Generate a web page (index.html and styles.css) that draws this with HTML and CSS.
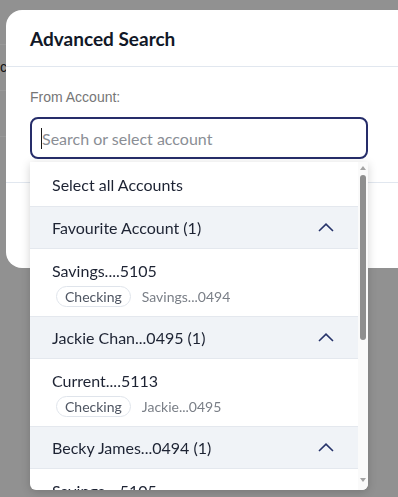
FILE: index.html
```html
<!DOCTYPE html>
<html lang="en">
<head>
    <meta charset="UTF-8">
    <meta name="viewport" content="width=device-width, initial-scale=1.0">
    <title>Advanced Search</title>
    <link rel="stylesheet" href="styles.css">
</head>
<body>
    <!-- page behind the dialog -->
    <div class="page">
        <div class="page-head"></div>
        <div class="page-row">contact</div>
        <div class="page-row"></div>
    </div>
    <div class="overlay"></div>

    <div class="modal">
        <div class="modal-header">
            <h2>Advanced Search</h2>
        </div>
        <div class="modal-body">
            <label class="field-label" for="account">From Account:</label>
            <div class="select">
                <input class="select-input" id="account" type="text" placeholder="Search or select account" autofocus>
                <span class="caret"></span>
                <div class="dropdown">
                    <div class="dropdown-list">
                        <div class="option-all">Select all Accounts</div>

                        <div class="group-head">
                            <span>Favourite Account (1)</span>
                            <svg class="chevron" width="16" height="9" viewBox="0 0 16 9"><path d="M1 8 L8 1.2 L15 8" fill="none" stroke="#26336a" stroke-width="1.6"/></svg>
                        </div>
                        <div class="account">
                            <div class="account-name">Savings....5105</div>
                            <div class="account-meta"><span class="chip">Checking</span><span class="owner">Savings...0494</span></div>
                        </div>

                        <div class="group-head">
                            <span>Jackie Chan...0495 (1)</span>
                            <svg class="chevron" width="16" height="9" viewBox="0 0 16 9"><path d="M1 8 L8 1.2 L15 8" fill="none" stroke="#26336a" stroke-width="1.6"/></svg>
                        </div>
                        <div class="account">
                            <div class="account-name">Current....5113</div>
                            <div class="account-meta"><span class="chip">Checking</span><span class="owner">Jackie...0495</span></div>
                        </div>

                        <div class="group-head">
                            <span>Becky James...0494 (1)</span>
                            <svg class="chevron" width="16" height="9" viewBox="0 0 16 9"><path d="M1 8 L8 1.2 L15 8" fill="none" stroke="#26336a" stroke-width="1.6"/></svg>
                        </div>
                        <div class="account">
                            <div class="account-name">Savings....5105</div>
                            <div class="account-meta"><span class="chip">Checking</span><span class="owner">Becky...0494</span></div>
                        </div>
                    </div>
                    <div class="scrollbar">
                        <span class="arrow-up"></span>
                        <span class="thumb"></span>
                        <span class="arrow-down"></span>
                    </div>
                </div>
            </div>
        </div>
        <div class="modal-footer"></div>
    </div>
</body>
</html>
```

FILE: styles.css
```css
body {
    margin: 0;
    width: 398px;
    height: 497px;
    overflow: hidden;
    font-family: Lato, "Liberation Sans", sans-serif;
    background-color: #f2f2f2;
}
.page-head {
    height: 44px;
    border-bottom: 1px solid #ffffff;
}
.page-row {
    height: 45px;
    border-bottom: 1px solid #ffffff;
    font: 14px/45px "Liberation Sans", Arial, sans-serif;
    color: #222;
}
.overlay {
    position: fixed;
    inset: 0;
    background: rgba(0, 0, 0, 0.4);
}
.modal {
    position: absolute;
    left: 6px;
    top: 10px;
    width: 440px;
    height: 258px;
    background: #fff;
    border-radius: 16px;
    display: flex;
    flex-direction: column;
}
.modal-header {
    height: 57px;
    box-sizing: border-box;
    padding: 0 24px;
    display: flex;
    align-items: center;
    border-bottom: 1px solid #e1e7ef;
}
.modal-header h2 {
    margin: 0;
    font-size: 19px;
    font-weight: 700;
    color: #111827;
}
.modal-body {
    height: 116px;
    box-sizing: border-box;
    padding: 22px 24px 0;
    border-bottom: 1px solid #e1e7ef;
}
.field-label {
    display: block;
    margin-bottom: 11px;
    font: 14px/17px "Liberation Sans", Arial, sans-serif;
    color: #767676;
}
.select {
    position: relative;
    width: 338px;
}
.select-input {
    display: block;
    width: 100%;
    height: 42px;
    box-sizing: border-box;
    padding: 0 10px;
    border: 2px solid #262d6a;
    border-radius: 8px;
    outline: none;
    font-family: Lato, sans-serif;
    font-size: 16px;
    color: #1d2333;
    caret-color: transparent;
}
.select-input::placeholder {
    color: #8a8e95;
}
.caret {
    position: absolute;
    left: 11px;
    top: 11px;
    width: 1px;
    height: 21px;
    background: #1a1a1a;
}
.dropdown {
    position: absolute;
    top: 45px;
    left: 0;
    right: 0;
    height: 328px;
    display: flex;
    background: #fff;
    border-radius: 0 0 6px 6px;
    box-shadow: 0 2px 10px rgba(0, 0, 0, 0.18);
    overflow: hidden;
}
.dropdown-list {
    flex: 1;
    overflow: hidden;
    font-size: 16px;
    color: #1d2333;
}
.option-all {
    height: 44px;
    padding-left: 22px;
    display: flex;
    align-items: center;
}
.group-head {
    height: 43px;
    box-sizing: border-box;
    padding: 0 24px 0 22px;
    display: flex;
    align-items: center;
    justify-content: space-between;
    background: #f0f3f7;
    border-top: 1px solid #e4e8ee;
    border-bottom: 1px solid #e4e8ee;
}
.account {
    height: 67px;
    box-sizing: border-box;
    padding: 11px 22px 8px;
}
.account-name {
    line-height: 22px;
}
.account-meta {
    display: flex;
    align-items: center;
    gap: 11px;
    margin-top: 4px;
    padding-left: 4px;
}
.chip {
    height: 21px;
    box-sizing: border-box;
    padding: 0 8px;
    border: 1px solid #dfe4eb;
    border-radius: 11px;
    font-size: 14px;
    line-height: 19px;
    color: #4f5663;
}
.owner {
    font-size: 14px;
    color: #7a7f87;
}
.scrollbar {
    width: 10px;
    background: #fafafa;
    display: flex;
    flex-direction: column;
    align-items: center;
}
.arrow-up {
    margin-top: 4px;
    border-left: 3.5px solid transparent;
    border-right: 3.5px solid transparent;
    border-bottom: 4px solid #a3a3a3;
}
.thumb {
    margin-top: 5px;
    width: 6px;
    height: 165px;
    border-radius: 3px;
    background: #8e8e8e;
}
.arrow-down {
    margin-top: auto;
    margin-bottom: 8px;
    border-left: 3.5px solid transparent;
    border-right: 3.5px solid transparent;
    border-top: 4px solid #a3a3a3;
}
```
